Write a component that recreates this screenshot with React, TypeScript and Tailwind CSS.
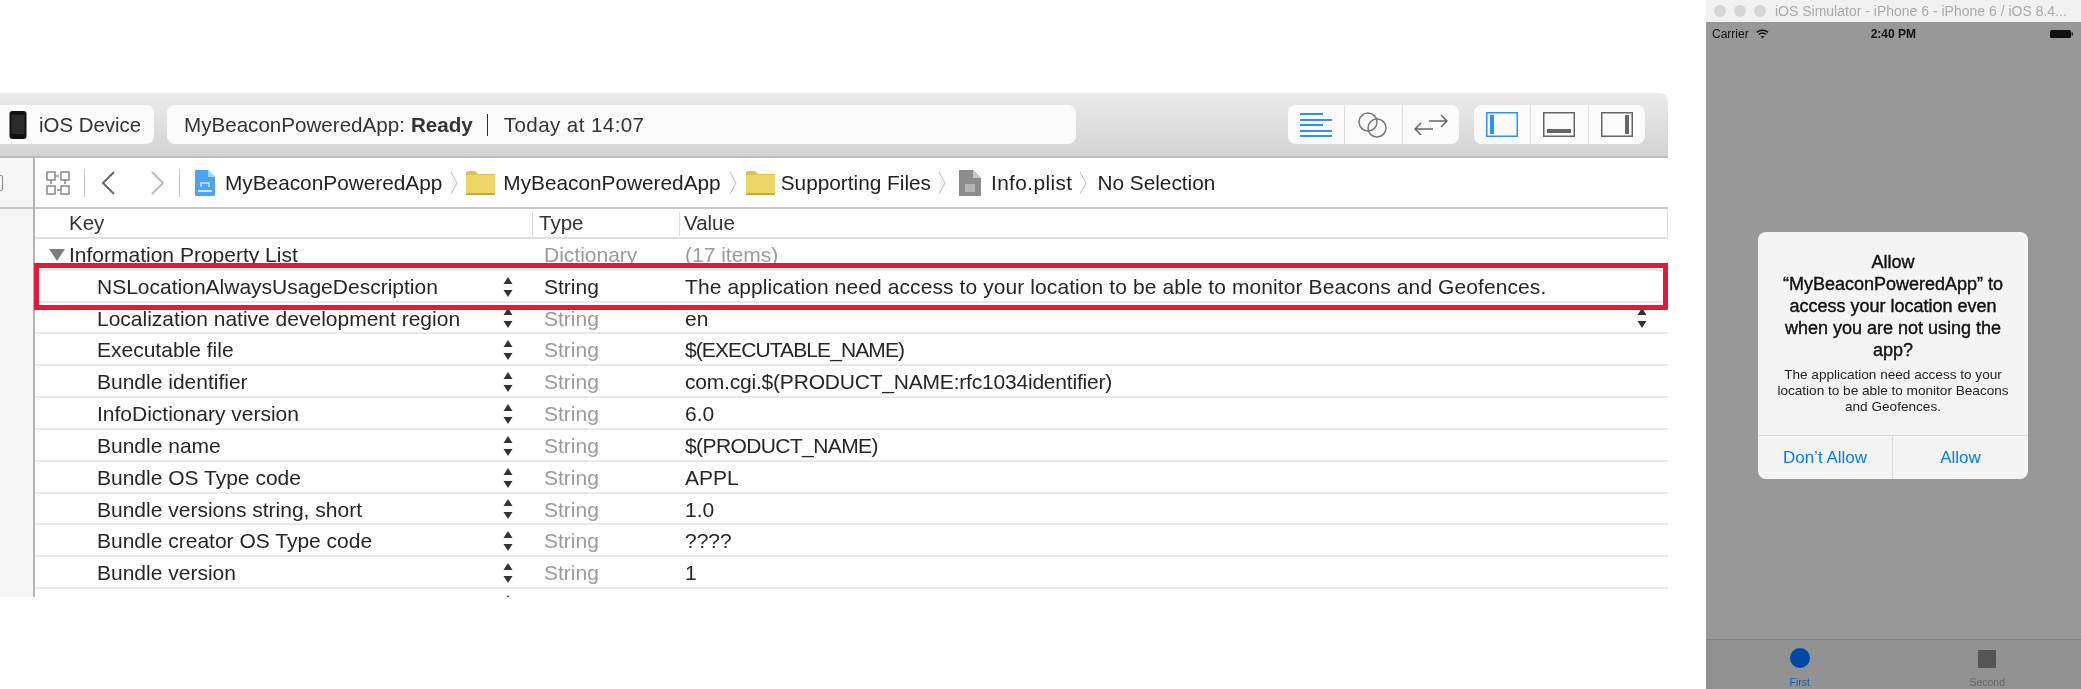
import React from "react";

const rows = [
  ["Localization native development region", "en", ""],
  ["Executable file", "$(EXECUTABLE_NAME)", "tracking-[-0.9px]"],
  ["Bundle identifier", "com.cgi.$(PRODUCT_NAME:rfc1034identifier)", "tracking-[-0.2px]"],
  ["InfoDictionary version", "6.0", ""],
  ["Bundle name", "$(PRODUCT_NAME)", "tracking-[-0.6px]"],
  ["Bundle OS Type code", "APPL", ""],
  ["Bundle versions string, short", "1.0", ""],
  ["Bundle creator OS Type code", "????", ""],
  ["Bundle version", "1", ""],
];

function Stepper() {
  return (
    <svg width="10" height="22" viewBox="0 0 10 22" className="shrink-0">
      <path d="M5 1 L9.5 8 L0.5 8 Z" fill="#333" />
      <path d="M5 21 L9.5 14 L0.5 14 Z" fill="#333" />
    </svg>
  );
}

function Row({ k, v, strong, stepper, valueClass }: { k: string; v: string; strong?: boolean; stepper?: boolean; valueClass?: string }) {
  return (
    <div className="grid h-[31.83px] shrink-0 grid-cols-[62px_447px_141px_1fr] items-center border-b-2 border-[#e9e9e9] text-[21px] text-[#262626]">
      <div />
      <div className="flex items-center justify-between pr-[31px]">
        <span>{k}</span>
        <Stepper />
      </div>
      <span className={strong ? "" : "text-[#9a9a9a]"}>String</span>
      <div className="flex items-center justify-between pr-[21px]">
        <span className={valueClass}>{v}</span>
        {stepper && <Stepper />}
      </div>
    </div>
  );
}

function Folder() {
  return (
    <svg width="29" height="24" viewBox="0 0 29 24" className="shrink-0">
      <path d="M0 2 Q0 0 2 0 H9 L12 3 H29 V24 H0 Z" fill="#dcc04e" />
      <path d="M0 4 H29 V23 H0 Z" fill="#ecd768" />
      <rect x="0" y="22" width="29" height="2" fill="#c4a93d" />
    </svg>
  );
}

function Crumb() {
  return (
    <svg width="8" height="26" viewBox="0 0 8 26" className="shrink-0">
      <path d="M1 2 L7 13 L1 24" fill="none" stroke="#bdbdbd" strokeWidth="1" />
    </svg>
  );
}

export default function App() {
  return (
    <div className="flex h-[689px] w-[2081px] overflow-hidden bg-white font-['Liberation_Sans',Arial,sans-serif] blur-[0.5px]">
      {/* Xcode window */}
      <div className="relative mt-[93px] flex h-[504px] w-[1668px] shrink-0 flex-col overflow-hidden">
        {/* Toolbar */}
        <div className="flex h-[65px] shrink-0 items-center rounded-tr-lg border-b-2 border-[#bcbcbc] bg-gradient-to-b from-[#ebebeb] to-[#d3d3d3]">
          <div className="flex h-[39px] w-[154px] items-center rounded-r-lg bg-[#fbfbfb] pl-[9px] pt-[1px] text-[20.4px] text-[#333]">
            <svg width="18" height="28" viewBox="0 0 18 28">
              <rect x="0.5" y="0" width="17" height="28" rx="3" fill="#111" />
              <rect x="2.5" y="4" width="13" height="19" fill="#2b2b2b" />
            </svg>
            <span className="ml-[12px]">iOS Device</span>
          </div>
          <div className="ml-[13px] flex h-[39px] w-[909px] items-center rounded-lg bg-[#fbfbfb] pl-[17px] pt-[1px] text-[20.6px] text-[#333]">
            <span>MyBeaconPoweredApp:</span>
            <span className="ml-[6px] font-bold">Ready</span>
            <span className="ml-[14px] h-[22px] w-px bg-[#333]" />
            <span className="ml-[16px] tracking-[0.4px]">Today at 14:07</span>
          </div>
          <div className="ml-[212px] flex h-[39px] w-[171px] rounded-lg bg-[#fbfbfb]">
            <div className="flex flex-1 items-center justify-center border-r border-[#dcdcdc]">
              <svg width="32" height="24" viewBox="0 0 32 24" stroke="#2f8fff" strokeWidth="2">
                <path d="M0 1 H23 M0 7 H32 M0 12 H23 M0 18 H32 M0 23 H32" />
              </svg>
            </div>
            <div className="flex flex-1 items-center justify-center border-r border-[#dcdcdc]">
              <svg width="30" height="26" viewBox="0 0 30 26" fill="none" stroke="#777" strokeWidth="1.5">
                <circle cx="10" cy="10" r="9" />
                <circle cx="19" cy="16" r="9" />
              </svg>
            </div>
            <div className="flex flex-1 items-center justify-center">
              <svg width="34" height="22" viewBox="0 0 34 22" fill="none" stroke="#666" strokeWidth="1.5">
                <path d="M15 7 H33 M27 1 L33 7 L27 13" />
                <path d="M19 15 H1 M7 9 L1 15 L7 21" />
              </svg>
            </div>
          </div>
          <div className="ml-[15px] flex h-[39px] w-[171px] rounded-lg bg-[#fbfbfb]">
            <div className="flex flex-1 items-center justify-center border-r border-[#dcdcdc]">
              <svg width="32" height="25" viewBox="0 0 32 25">
                <rect x="0.75" y="0.75" width="30.5" height="23.5" fill="none" stroke="#2f8fff" strokeWidth="1.5" />
                <rect x="4" y="3" width="4" height="19" fill="#2f8fff" />
              </svg>
            </div>
            <div className="flex flex-1 items-center justify-center border-r border-[#dcdcdc]">
              <svg width="32" height="25" viewBox="0 0 32 25">
                <rect x="0.75" y="0.75" width="30.5" height="23.5" fill="none" stroke="#666" strokeWidth="1.5" />
                <rect x="4" y="17" width="24" height="4" fill="#666" />
              </svg>
            </div>
            <div className="flex flex-1 items-center justify-center">
              <svg width="32" height="25" viewBox="0 0 32 25">
                <rect x="0.75" y="0.75" width="30.5" height="23.5" fill="none" stroke="#666" strokeWidth="1.5" />
                <rect x="24" y="3" width="4" height="19" fill="#666" />
              </svg>
            </div>
          </div>
        </div>

        <div className="flex min-h-0 flex-1">
          {/* Left gutter */}
          <div className="w-[35px] shrink-0 border-r-2 border-[#b4b4b4] bg-[#f5f5f5]">
            <div className="flex h-[51px] items-center border-b-2 border-[#c8c8c8]">
              <div className="ml-[-9px] h-[16px] w-[12px] rounded-[2px] border border-[#888]" />
            </div>
          </div>

          <div className="flex min-w-0 flex-1 flex-col">
            {/* Breadcrumb bar */}
            <div className="flex h-[51px] shrink-0 items-center border-b-2 border-[#c8c8c8] pt-[1px] text-[20.8px] whitespace-nowrap text-[#222]">
              <svg width="24" height="24" viewBox="0 0 24 24" fill="none" stroke="#888" strokeWidth="1.5" className="ml-[11px] shrink-0">
                <path d="M1 1 H9 V9 H1 Z M15 1 H23 V9 H15 Z M1 15 H9 V23 H1 Z M15 15 H23 V23 H15 Z" />
                <path d="M9 5 H13 M19 9 V13 M5 9 V13 M11 19 H15" />
              </svg>
              <span className="ml-[14px] h-[28px] w-px bg-[#c4c4c4]" />
              <svg width="14" height="24" viewBox="0 0 14 24" fill="none" stroke="#666" strokeWidth="2" className="ml-[16px] shrink-0">
                <path d="M13 1 L2 12 L13 23" />
              </svg>
              <svg width="14" height="24" viewBox="0 0 14 24" fill="none" stroke="#bbb" strokeWidth="2" className="ml-[36px] shrink-0">
                <path d="M1 1 L12 12 L1 23" />
              </svg>
              <span className="ml-[14px] h-[28px] w-px bg-[#c4c4c4]" />
              <svg width="20" height="26" viewBox="0 0 20 26" className="ml-[15px] shrink-0">
                <path d="M0 1 Q0 0 1 0 H13 L20 7 V25 Q20 26 19 26 H1 Q0 26 0 25 Z" fill="#4da3f0" />
                <path d="M13 0 L20 7 H13 Z" fill="#a8d4f8" />
                <path d="M6 17 V13 H14 V17" fill="none" stroke="#cfe7fb" strokeWidth="1.5" />
                <rect x="3" y="20" width="14" height="2" fill="#cfe7fb" />
              </svg>
              <span className="ml-[10px]">MyBeaconPoweredApp</span>
              <span className="ml-[8px]"><Crumb /></span>
              <span className="ml-[8px]"><Folder /></span>
              <span className="ml-[8px]">MyBeaconPoweredApp</span>
              <span className="ml-[8px]"><Crumb /></span>
              <span className="ml-[9px]"><Folder /></span>
              <span className="ml-[6px]">Supporting Files</span>
              <span className="ml-[7px]"><Crumb /></span>
              <svg width="22" height="26" viewBox="0 0 22 26" className="ml-[13px] shrink-0">
                <path d="M0 0 H14 L22 8 V26 H0 Z" fill="#8c8c8c" />
                <path d="M14 0 L22 8 H14 Z" fill="#c8c8c8" />
                <rect x="6" y="14" width="10" height="8" fill="#b5b5b5" />
              </svg>
              <span className="ml-[10px] tracking-[0.4px]">Info.plist</span>
              <span className="ml-[7px]"><Crumb /></span>
              <span className="ml-[10px]">No Selection</span>
            </div>

            {/* Table header */}
            <div className="flex h-[30px] shrink-0 items-center border-b-2 border-[#dedede] pl-[34px] pt-[1px] text-[20.5px] text-[#333]">
              <span className="w-[463px]">Key</span>
              <span className="flex h-[24px] w-[147px] items-center border-l border-[#ddd] pl-[6px]">Type</span>
              <span className="flex h-[24px] flex-1 items-center border-x border-[#ddd] pl-[4px]">Value</span>
            </div>

            {/* Rows */}
            <div className="flex min-h-0 flex-1 flex-col overflow-hidden">
              <div className="grid h-[31.83px] shrink-0 grid-cols-[509px_141px_1fr] items-center border-b-2 border-[#e9e9e9] text-[21px] text-[#262626]">
                <div className="flex items-center pl-[14px]">
                  <svg width="16" height="12" viewBox="0 0 16 12">
                    <path d="M0 0 H16 L8 12 Z" fill="#7d7d7d" />
                  </svg>
                  <span className="ml-[4px]">Information Property List</span>
                </div>
                <span className="text-[#9a9a9a]">Dictionary</span>
                <span className="text-[#9a9a9a]">(17 items)</span>
              </div>
              <Row k="NSLocationAlwaysUsageDescription" v="The application need access to your location to be able to monitor Beacons and Geofences." valueClass="tracking-[0.09px]" strong />
              {rows.map(([k, v, valueClass], i) => (
                <Row key={k} k={k} v={v} valueClass={valueClass} stepper={i === 0} />
              ))}
              <div className="grid h-[31.83px] shrink-0 grid-cols-[62px_447px_141px_1fr] items-center">
                <div />
                <div className="flex justify-end pr-[31px]">
                  <Stepper />
                </div>
              </div>
            </div>
          </div>
        </div>

        {/* Red highlight */}
        <div className="absolute left-[34px] right-0 top-[170px] h-[47px] border-[5px] border-[#e2193a]" />
      </div>

      {/* Simulator window */}
      <div className="relative ml-[38px] flex w-[375px] shrink-0 flex-col">
        <div className="flex h-[22px] shrink-0 items-center bg-[#f1f1f1] pl-[8px] text-[14px] text-[#a9a9a9]">
          <span className="h-[12px] w-[12px] rounded-full bg-[#d4d4d4]" />
          <span className="ml-[8px] h-[12px] w-[12px] rounded-full bg-[#d4d4d4]" />
          <span className="ml-[8px] h-[12px] w-[12px] rounded-full bg-[#d4d4d4]" />
          <span className="ml-[9px] whitespace-nowrap">iOS Simulator - iPhone 6 - iPhone 6 / iOS 8.4...</span>
        </div>
        <div className="flex h-[22px] shrink-0 items-center bg-[#989898] pl-[6px] pr-[8px] pt-[1px] text-[12px] text-[#111]">
          <span>Carrier</span>
          <svg width="13" height="10" viewBox="0 0 12 9" fill="none" stroke="#111" strokeWidth="1.2" className="ml-[7px]">
            <path d="M0.8 3 Q6 -1 11.2 3" />
            <path d="M2.6 5 Q6 2.2 9.4 5" />
            <path d="M6 8.6 L4.4 6.8 Q6 5.6 7.6 6.8 Z" fill="#111" stroke="none" />
          </svg>
          <span className="ml-[102px] font-bold">2:40 PM</span>
          <svg width="23" height="8" viewBox="0 0 23 8" className="ml-auto">
            <rect x="0" y="0" width="21" height="8" rx="1.5" fill="#111" />
            <rect x="21.5" y="2.5" width="1.5" height="3" fill="#222" />
          </svg>
        </div>
        <div className="flex-1 bg-[#989898]" />
        <div className="grid h-[50px] shrink-0 grid-cols-2 border-t border-[#808080] bg-[#929292] text-[10.5px]">
          <div className="flex flex-col items-center pt-[8px] text-[#1d5cb0]">
            <span className="h-[20px] w-[20px] rounded-full bg-[#0047a6]" />
            <span className="mt-[7px]">First</span>
          </div>
          <div className="flex flex-col items-center pt-[10px] text-[#666]">
            <span className="h-[18px] w-[18px] bg-[#555]" />
            <span className="mt-[7px]">Second</span>
          </div>
        </div>

        {/* Alert */}
        <div className="absolute left-[52px] top-[232px] flex h-[247px] w-[270px] flex-col rounded-lg bg-[#f4f4f4] text-center">
          <div className="mt-[19px] text-[18px] leading-[22px] text-[#111] [-webkit-text-stroke:0.4px_#111]">
            Allow
            <br />
            “MyBeaconPoweredApp” to
            <br />
            access your location even
            <br />
            when you are not using the
            <br />
            app?
          </div>
          <div className="mt-[6px] text-[13.6px] leading-[16px] text-[#222]">
            The application need access to your
            <br />
            location to be able to monitor Beacons
            <br />
            and Geofences.
          </div>
          <div className="mt-auto grid h-[44px] grid-cols-2 border-t border-[#dcdcdc] text-[17px] text-[#007aff]">
            <div className="flex items-center justify-center border-r border-[#dcdcdc]">Don’t Allow</div>
            <div className="flex items-center justify-center">Allow</div>
          </div>
        </div>
      </div>
    </div>
  );
}
